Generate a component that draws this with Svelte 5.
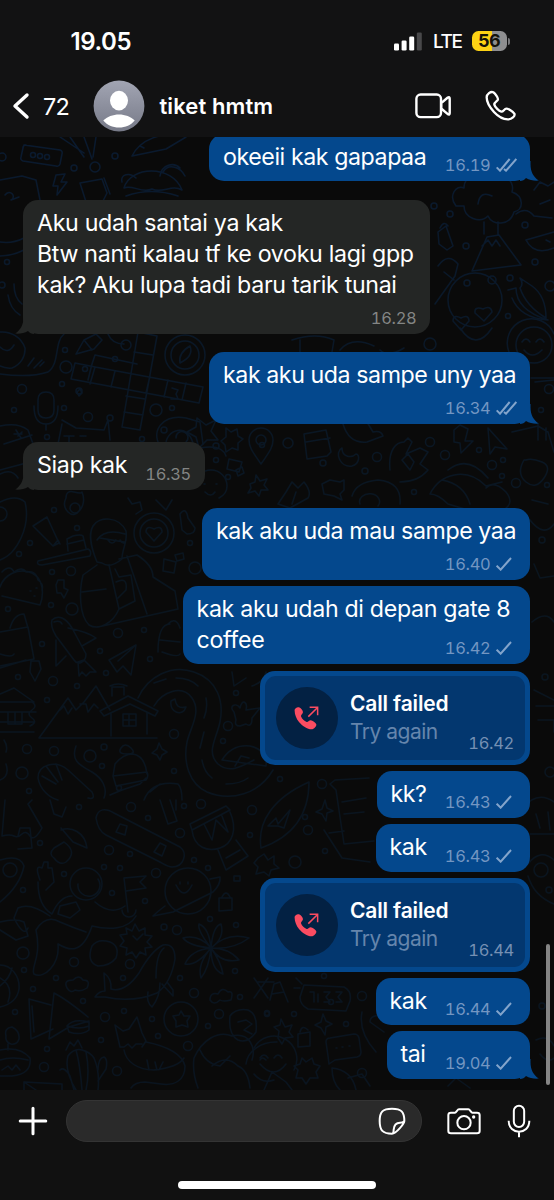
<script lang="ts">
type Tick = 'none' | 'sent' | 'delivered';

interface Message {
  kind: 'text' | 'call';
  mine: boolean;
  lines: string[];
  time: string;
  width: number;
  layout?: 'inline' | 'stacked' | 'overlap';
  tick?: Tick;
  tail?: boolean;
  first?: boolean;
}

const messages: Message[] = [
  { kind: 'text', mine: true, lines: ['okeeii kak gapapaa'], time: '16.19', width: 321, layout: 'inline', tick: 'delivered', tail: true },
  { kind: 'text', mine: false, lines: ['Aku udah santai ya kak', 'Btw nanti kalau tf ke ovoku lagi gpp', 'kak? Aku lupa tadi baru tarik tunai'], time: '16.28', width: 407, layout: 'stacked', tail: true, first: true },
  { kind: 'text', mine: true, lines: ['kak aku uda sampe uny yaa'], time: '16.34', width: 321, layout: 'stacked', tick: 'delivered', tail: true, first: true },
  { kind: 'text', mine: false, lines: ['Siap kak'], time: '16.35', width: 181.5, layout: 'inline', tail: true, first: true },
  { kind: 'text', mine: true, lines: ['kak aku uda mau sampe yaa'], time: '16.40', width: 328, layout: 'stacked', tick: 'sent', first: true },
  { kind: 'text', mine: true, lines: ['kak aku udah di depan gate 8', 'coffee'], time: '16.42', width: 347.5, layout: 'overlap', tick: 'sent' },
  { kind: 'call', mine: true, lines: ['Call failed', 'Try again'], time: '16.42', width: 270 },
  { kind: 'text', mine: true, lines: ['kk?'], time: '16.43', width: 153.5, layout: 'inline', tick: 'sent' },
  { kind: 'text', mine: true, lines: ['kak'], time: '16.43', width: 154.5, layout: 'inline', tick: 'sent' },
  { kind: 'call', mine: true, lines: ['Call failed', 'Try again'], time: '16.44', width: 270 },
  { kind: 'text', mine: true, lines: ['kak'], time: '16.44', width: 154.5, layout: 'inline', tick: 'sent' },
  { kind: 'text', mine: true, lines: ['tai'], time: '19.04', width: 143.5, layout: 'inline', tick: 'sent', tail: true },
];

const dots: [number, number, number][] = [
  [2, 157, 4], [33, 155, 2.5], [40, 156, 2.5], [47, 157, 2.5], [74, 168, 3], [95, 167, 5], [115, 156, 3],
  [7, 262, 2.5], [2, 285, 3], [65, 350, 2.5], [66, 367, 6], [85, 369, 2.5], [126, 345, 5], [115, 359, 2.5], [22, 389, 4.5],
  [62, 384, 2.5], [64, 408, 2.5], [14, 410, 2.5], [88, 417, 4.5], [110, 418, 3], [156, 410, 6], [172, 408, 2.5], [79, 391, 3],
  [47, 437, 2.5], [142, 439, 2.5], [164, 430, 3], [216, 446, 3], [216, 460, 2.5], [228, 477, 2.5], [262, 445, 2.5],
  [54, 510, 2.5], [77, 528, 2.5], [30, 543, 2.5], [19, 554, 2.5], [52, 572, 2.5], [71, 571, 4.5], [8, 609, 2.5], [51, 605, 2.5],
  [72, 609, 6], [118, 633, 4.5], [144, 630, 2.5], [42, 644, 2.5], [100, 651, 2.5], [150, 659, 2.5], [106, 673, 2.5],
  [53, 681, 4.5], [77, 686, 2.5], [18, 677, 2.5], [47, 700, 2.5], [27, 749, 4.5], [54, 751, 4.5], [90, 756, 6], [104, 747, 3],
  [22, 773, 6], [102, 766, 2.5], [174, 734, 4.5], [174, 771, 2.5], [119, 788, 2.5], [29, 791, 2.5], [195, 568, 6], [190, 543, 2.5],
  [228, 726, 4.5], [223, 741, 2.5], [236, 693, 2.5], [79, 807, 2.5], [131, 807, 4.5], [148, 818, 2.5], [184, 806, 2.5],
  [201, 804, 4.5], [252, 810, 4.5], [250, 835, 2.5], [40, 843, 2.5], [109, 850, 4.5], [130, 854, 2.5], [180, 833, 4.5],
  [194, 860, 2.5], [208, 868, 2.5], [104, 867, 2.5], [120, 868, 2.5], [156, 873, 4.5], [64, 874, 2.5], [23, 890, 2.5],
  [145, 901, 2.5], [112, 893, 2.5], [210, 919, 2.5], [164, 927, 3], [177, 930, 4.5], [236, 925, 2.5], [23, 953, 6],
  [74, 962, 4.5], [130, 964, 4.5], [24, 970, 2.5], [56, 978, 2.5], [33, 989, 2.5], [123, 978, 2.5], [180, 978, 2.5],
  [194, 993, 4.5], [235, 971, 2.5], [240, 997, 2.5], [15, 1012, 2.5], [83, 1001, 2.5], [105, 1017, 4.5], [124, 1011, 2.5],
  [152, 1019, 2.5], [219, 1014, 4.5], [208, 1026, 2.5], [267, 1014, 2.5], [101, 1040, 2.5], [158, 1036, 2.5], [188, 1046, 4.5],
  [47, 1049, 2.5], [44, 1067, 4.5], [117, 1071, 4.5], [434, 206, 3], [450, 214, 3], [466, 246, 3], [525, 225, 3],
  [535, 262, 3], [467, 283, 3], [492, 280, 4], [510, 278, 3], [508, 316, 2.5], [430, 344, 6], [550, 286, 5], [549, 389, 4.5],
  [541, 410, 2.5], [288, 443, 5], [323, 463, 3], [365, 471, 3], [377, 457, 4.5], [430, 442, 4.5], [445, 455, 4.5],
  [479, 450, 2.5], [492, 465, 4.5], [503, 460, 2.5], [502, 476, 2.5], [516, 483, 4.5], [414, 492, 2.5], [547, 485, 2.5],
  [322, 784, 4.5], [280, 779, 2.5], [308, 830, 4.5], [325, 851, 2.5], [295, 862, 6], [305, 817, 2.5], [362, 996, 4.5],
  [324, 976, 2.5], [331, 1002, 2.5], [267, 1013, 2.5], [294, 1014, 2.5], [346, 1024, 2.5], [362, 1073, 4.5], [542, 540, 3],
  [545, 677, 3], [550, 772, 5], [549, 890, 3], [542, 1006, 3],
];

const doodles: string[] = [
  // speech card, bolt, hut and palm
  'M24 145l36 5q3 1 2 4l-2 10q-1 3-4 2l-33-5q-3-1-2-4l2-9q0-3 3-3zM56 175l-3 11 5 0-1 9 10-13-6 0 4-8zM80 183l22-4 5 14-6 12h-14zM104 178l6 16',
  'M132 156c8-16 30-26 54-19l-20 12zM140 146l4 2M124 188c6-22 48-24 58 2-10-6-20 4-30-1-10 5-20-5-28-1zM126 196q25-9 52 0M160 176c2-12 14-14 20-8M163 172c6-10 18-4 22 4M122 182c-2-8 8-10 14-4',
  'M0 180l22-4 14 4 4 20M5 195c5-7 12 2 6 5l8-3M60 137l24 16M70 137l14 20M84 137l8 22M96 137l-3 20',
  // left margin
  'M0 242q12 2 24-4M0 256q12 0 24-6M8 295q2 14 12 20M14 284q0 14 8 20M0 332a24 24 0 0 1 25 16a20 20 0 0 1-13 20a22 22 0 0 1-12-2M0 347q8 8 14-2M28 366l6-8M34 368l8-8M40 366l4-4',
  'M0 374q30 4 48-2c12-8 6-30 16-38M76 354l8-14 12-6 6 6-8 9zM84 340l8 10M108 334q4 10 16 10',
  // crossword
  'M95 367l108 20-4 16-128-24 4-16zM138 332l19 4-17 94-18-3zM95 367l-5 17M115 371l-4 16M150 376l-4 17M168 380l-4 17M186 383l-4 17M134 352l19 3M126 396l19 3M124 412l19 3M92 364l3-9 42 9M92 364l-4 16',
  'M77 392l3-3 2 4-3 3zM172 388l6 2-2 4 2 5-7 0',
  'M165 355a20 20 0 1 0 40 0a20 20 0 1 0-40 0M171 355a14 14 0 1 0 28 0a14 14 0 1 0-28 0M180 363q-2-10 10-17q4 10-10 17z',
  'M38 410v-10q0-8 8-8t8 8v10q0 8-8 8t-8-8zM34 406q0 18 12 18t12-18M46 424v6',
  'M62 424l-4 20M62 420l14 8 28 2 4-10 2 20M64 436l10 0-5 0v6M80 436l6 0M160 446c-10-16 4-32 26-28l14 4 3 22M166 446c-2-16 24-26 28 2M176 438a6 6 0 1 1 10 4',
  'M197 418l9 7 10-5-5 11 7 9-11 0-8 8-3-11-9-5 9-5zM226 428l5 4 6-3 1 7 5 3-5 4 0 7-6-2-6 4-1-7-4-4 5-4z',
  'M261 464c-10-14-12-18-12-24a12 12 0 0 1 24 0c0 6-2 10-12 24zM256 440a5 5 0 1 0 10 0a5 5 0 1 0-10 0M229 459l13 3-3 10-12-3zM236 470l6-3 2 6-6 3zM250 484l5-2 1-7 4 6 7-2-3 6 4 5-7 0-2 6-4-5-7 2 3-5z',
  'M0 426q18-4 28 4l8 22q2 8-6 10l-30 8M22 432l-4 4M14 434l8 0M16 430l5 8M4 444l28-9M0 474q12-6 18 4',
  // donut, tube, brush
  'M0 502q16-8 25 0c6 24-8 52-25 58M0 507a7 7 0 1 1 0 14M66 498q0-8 8-6t8 0q4 10-2 18-6 8-12 2t-2-14zM70 508a5 5 0 1 0 10 0a5 5 0 1 0-10 0M128 498l4 6 8-2 2 8-6 4M156 500l10 10 6-10',
  'M33 526l14-9 12 26-6 3zM53 546l5-6 2 4M38 561l50-12q4 2 2 7l-48 9q-6 0-4-4zM68 551l-1-12 6-3q8-2 10 0l3 12M67 544l17-4',
  // reader and books
  'M97 562c-4-10-10-26-4-36 6-10 26-10 33 5 2 10-4 18-4 28q-12 10-20 4zM97 540q8-12 28-6M100 538l24 4M108 540q4 6 8 0M120 540q4 6 6 0',
  'M97 565l-14 10c-4 16-4 40 6 50 10 6 24-2 30-16l-10-44M82 592l24-3M119 559l18-4q16 10 16 22M127 556l20 58M119 609l16-8-4-26-12 2-4-8M116 582q12-6 10 8l-8 8M153 577l22 14 3 18-80 18',
  'M134 533a20 20 0 1 0 40 0a20 20 0 1 0-40 0M140 533a14 14 0 1 0 28 0a14 14 0 1 0-28 0M154 541l-8-9q0-7 8-3q8-4 8 3z',
  'M180 514q6-8 8 4l7 10q0 6-8 6l-5-4zM164 559l12 3-2 11-11-2zM175 555l8-2 1 6-7 2z',
  // taco, bag
  'M0 587c4-12 18-20 32-14 12 6 12 22 8 32l-38-9M2 572q8-8 12 0 8-6 12 0 10-2 12 8 6 4 4 10M30 591h1M34 596h1M36 588h1M56 585l2-5 6 0 0 8 4 2-4 8-3-5-4 0z',
  'M0 632l28-5 6 32-34 7M0 668l26-8M10 628q4-14 14-14l4 14M0 654q12 4 14 0M31 661l8 0 2 8-6 12-5-9z',
  // shuttle, paper plane
  'M52 620c6-6 14-2 20 8l14 26c0 8-8 12-12 6l-18-24q-6-10-4-16zM54 622q6-2 8 2M68 628q20 4 28 10l-14 8M56 640v26l10-10M78 662l6-2 12 12-6 0-4 4-4-4-3 4z',
  'M109 660l27-15-5 30-8-9-6 6zM136 645l-18 16M158 652q0-28 12-28M168 624q8-8 12 4M160 640l20 2M162 652q16 6 18 2',
  // mountain cabin
  'M39 738l29-40 8 12 8-8 12-16 14 24M39 738h118M60 710l4-4 4 8 4-6M80 704l6 0 2 8 6-8 4 4M100 711l28-15 30 15-3 5-25-12-26 12zM111 714v22M147 712v22M123 714h13v12h-13zM129 714v12M123 720h13M112 696l0-9 12 0 0 8M110 686q8-4 17 0',
  'M138 698c10-22 34-34 56-26 24 8 30 30 26 50-4 18-14 30-2 42 12 10 24 2 36-4M154 706c8-14 28-22 38-8 10 14-2 30-5 44-4 20 2 42 20 50 24 10 52 2 66-22M154 683l12-4M176 678q14 0 22 8M206 698q2 10-2 20M204 732l-4 16M202 760q2 12 10 18M226 784q14 0 22-6',
  'M171 701c-2 12 12 16 15 6-8 2-10-2-11-8zM234 712c-6-6 2-10 6-4 2-10 8-6 6 2l14-2-8 10q0 10-6 6l-6 2q-6 0-4-6zM222 760q10-16 28-14 18 4 16 20zM235 766l6-10 8 2',
  // log house, shrimp, hat
  'M0 694l14-6 20 14M0 702h32q6 4 0 8t0 8-2 8M0 712h36M0 722h34M0 732h34M8 712v12h14v-12M15 712v12M4 740q4 6 2 12M0 780q10-4 6-16',
  'M38 778c0-14 18-18 30-8l24 22q4 8-4 6M38 778c2 12 12 20 20 22M46 766l12 16M42 776l14 8M56 764l6 16M76 746c-6 16 6 20 16 26s16 16 12 26',
  'M113 776l2-12q8-10 18-10 12 2 14 20M113 776l34-4q2 4-1 8l-30 6zM121 748q4-6 10 0t-4 6-6-6M152 753l5-4 2-6 3 6 5 3-5 3-2 5-3-5zM144 800q8-20 34-16 4 4 4 16M150 792l10-8M110 795l12-5 18-6 6-6',
  // tree, snowboard, drum
  'M5 800l-3 36q8-2 12 0t8-2 8 2 12-8l-14-24 4-4M18 836l2-8 10 0 2 20-14 1M50 800l4 14 8 3 4-10M160 800l8 24 9-3-7-21M176 800v10',
  'M96 818c2-10 10-10 18-5l66 34c8 6 4 20-8 20-4 0-8-3-14-6l-52-26q-8-4-10-17zM116 832l4-8 7 2-2 9zM154 852l6-9 6 3-4 10z',
  'M190 824l36-18 4 4-38 20zM192 830c2 18 16 22 28 18 12-4 18-18 10-36M204 824l8 16 4-20 12 12-6-16M218 850l8 20 22-14-12-16M226 858l14-8',
  'M54 858q-6-4 0-10l10-6q14 10 2 20-6 4-12-4zM61 830c10-4 24 2 26 18l-14-6-12-14M0 860q20-6 24 6-4 20-24 36M3 870a7 7 0 1 0 14 0a7 7 0 1 0-14 0',
  // astronaut with flag
  'M70 884a16 16 0 1 0 32 0a16 16 0 1 0-32 0M78 884a11 11 0 1 0 20-5M40 880q-6-16 2-12l2-6 4 0 0 6 4 0 2 14-8 8M38 882q0 24 14 32M52 914q8-18 20-18M60 906l16-4 4 8-10 8-12-4zM124 878l4 34M124 878l22-2-6 6 6 6-20 3M95 902q16 14 30 4M122 910a7 7 0 1 0 14 0M136 916c-8 14-28 14-44 10-10 30-24 24-34 18M50 916q-20-14-32-8l-4 10q10 20 14 10M36 930q10-16 24-8c14 6 20 8 26 10M36 930c6 28-6 38-2 44 10 6 26-10 24-30M0 922q16-4 24 0l4 14-12 4-16-10',
  // planet, lock, anise
  'M165 891a23 23 0 1 0 46 0a23 23 0 1 0-46 0M165 906q-8 6-12 10l20-4 40-20q8-8 7-15l-10 2M176 885q8 16 16 0M180 884v-2M188 884v-2M219 898l13 0 0 12-13 1zM222 897q4-8 8 0M234 876h6v5h-6z',
  'M211 948q-14-18-12-24 10 4 12 24zq2-22 10-24 4 14-10 24zq16-16 38-10-16 12-38 10zq18 0 28 12-18 4-28-12zq10 14 12 26-12-4-12-26zq-2 20-10 30-4-14 10-30zq-14 18-26 16 6-14 26-16zq-22-2-28-10 16-4 28 10z',
  'M126 928l6 3 3-7 4 7 6-3 0 7 7 1-5 6 5 5-7 1 1 7-6-3-4 6-4-6-6 3 1-7-7-2 4-5-4-6 7-1zM133 936l4 4 6-6M92 946q6-8 18-4 10 4 6 16-6 8-18 8-12-4-6-20z',
  // whale, clouds, cake
  'M95 997q4-6 10-6l-1-18q8 6 7 16 14 4 28-16 12-22 24-28 12-2 12 14-4 24-18 34-24 10-52 4zM148 992q-2 10 4 15 8-10 8-24M162 984l11 12 0-6-6-8M164 948q-8 6-8 30',
  'M67 988q-4-8 6-8 6-6 10 0 8 0 4 8-6 4-12 2-4 4-8-2zM210 1000q0-8 8-6 4-8 10-2 6-2 3 8-8 2-11 0-6 6-10 0zM29 999l22 6M29 999l2 40 22-10M54 993l-5 46 20-12 20-6M54 993q12 6 34 24M32 1006l2 26M67 1026q6-8 22-4v8q-8 6-20 2zM67 1026q12 4 22 0',
  'M164 1019a17 17 0 1 0 34 0a17 17 0 1 0-34 0M181 1011l3 5 6 0-3 5 1 6-6-2-6 2 0-6-3-5 6-1zM0 965a19 22 0 0 1 19 24q-2 14-19 18M0 986q10-8 12-18M0 978q14 8 8 24',
  'M6 1036q-2-8 6-9 8 4 7 12-2 6-8 5-6-2-5-8zM8 1044v6M0 1050q20-4 30 8 2 16-18 18l-12 0M2 1070l6-4 4 4 4-5 4 5M0 1060q12-4 28 0',
  // llama, cactus, bear
  'M115 1025l8 6 6-2 8-12 5 16 4 8-4 6M115 1025l5 22 4 0 4-3 4 4 4-4 6 0M124 1050c2 12 14 20 30 20 18-2 26-6 30-12M146 1042c20 4 36 12 39 24 0 14-10 20-24 18l-16-2q-10 0-14 6M147 1060l2 10M155 1062l2 8M163 1062l-4 8',
  'M68 1056q6-8 14-6 8 2 12 8 6 14 4 32M68 1056q-4 14 8 34M76 1050q4 14 6 40M86 1052q4 20 0 38M60 1070q4-4 10 6l4 14M98 1070q0-12 6-13 4 2 2 12l-8 12M66 1050l4-8 4 4 4-6 4 8M24 1090v-8l38 2v6M24 1082l12 8',
  'M194 1058c8-18 24-28 38-22 18-4 24 12 20 24M194 1058q-2 14 4 30M200 1050q6 14 20 16l10-10M212 1066q14-12 26 0 10 4 12 22M230 1016q6-8 18-6 10 4 8 22-8 12-18 8-10-6-8-24zM238 1022l8-2 6 4-8 6 8 4M246 1064a30 24 0 0 1 31-22M260 1060q2-4 6 0M254 1074q8 10 20 6',
  // right side
  'M456 206c-8-10 0-22 8-18 0-14 18-18 24-8 10-10 28-2 24 12 12 4 12 18 2 20-4 14-22 14-26 4-8 8-24 2-24-10zM484 222v12M498 222v12M472 271l15-34 12-2 22 30zM482 246l6-6 4 6 4-6 4 6M478 204q2-14 14-8M438 232l8-6 7 20-6 4-8-6zM440 228q4-8 8-2',
  'M448 300a27 27 0 1 0 54 0a27 27 0 1 0-54 0M461 330l-8-9q0-7 8-3q8-4 8 3zM484 321l-9-8q-1-7 8-4q8-4 9 3zM460 328q16 24 32 0',
  'M438 266q10-14 20-2l-3 12-20 28M444 272l10 8M526 240q8 16 28 8M526 240l28-8M546 240l4 2M508 290l8-2q0 22 32 32-28-2-36-22M520 278q4 6 0 10 6 18 26 30 0-22-14-32zM516 214q10-8 18 2l18 2M534 190l6-8 8 4 6-4M540 204l10-4',
  'M509 352a24 24 0 0 1 45-18M516 345a18 18 0 1 0 36 0a18 18 0 1 0-36 0M522 342q4-6 8 0M536 342q4-6 8 0M524 350q8 10 18 0M292 340q24-8 42 0l-2 12M300 340v12M340 350q12-14 34-4M380 350q8 8 24-2M531 378h23M535 382l19-2',
  'M304 434l22-4 5 22-4 4-20 3zM306 442l24-4M343 424q6 20 24 18l16-6q-2-6-10-4l-6-10M342 448c-8 4-2 20 10 18 8-2 8-12 4-12-4 4-14 4-14-6zM454 430l6-5 8 4-3 12 8 0-12 12-1-10-6-1zM488 428l2 26 5-7 12 2z',
  'M390 470c-2-20 6-28 14-28l4-4 4 4-6 12 14-6 8 4-8 12 8 6q-10 12-28 12M402 460l6-6 6 8-4 8zM512 432l26-6 10 6 6 20M538 424v16M546 428v12M524 460q-8 14 2 22t18-4-2-16-16-2z',
  'M430 494c10-20 36-28 56-8l16-4M430 494q8 0 18 10l20 6M448 470q20-16 40 8M442 480q22 4 28 24M486 488q8-8 20 4 8 10 0 16M352 496q4-14 26-16 24 2 22 24M360 504a10 8 0 1 1 18 2M322 484l8-4 10 2 4-2 0 10-4 4 2 6-8-4-10-2zM286 492l6-10 6 6 6-6q8 10 4 16l-18 10-12-4zM296 492l-4 12',
  'M261 848c-4-26 12-50 48-66 0 30-14 54-48 66zM268 826l8-8 2 6 12-14-6 18-6-2zM336 790l-6-6 5-4 34-2M336 790l8 54 30-3M342 802l24-4M344 814l20-2M324 830l18 28 28 4M329 833l15-2M325 800l2 8 6 3-6 2-1 8-4-7-6-2 6-3zM258 858l6-4 4 6 6-4 0 8 5 4-8 2-2 6-5-4-8 2 2-7-4-4z',
  'M254 978l14 20M268 978l-14 20M258 982h16M270 1000l4-16 6-2 8 20M272 994l12-2M304 985l40 2q8 4 6 14l-4 10-38-2q-8-4-8-12zM310 992l4 0v10M318 994v8M324 992h6l-4 5 4 5h-6M336 992h6l-4 5 4 5h-6M296 978l6 6M294 988l6 0',
  'M281 1019l4 8 7-2-3 7 4 5-8 1-3 6-4-6 1-7-5-4 6-2zM323 1014l3 7 6 3-6 3-1 8-4-7-6-3 6-3zM298 1034l12-2 0 14-12 1zM300 1032q2-8 8-2M326 1042q0-4 4-4l24-4q4 0 5 4l2 14q0 4-4 5l-22 3-6 4-1-8zM336 1048h1M342 1047h1M349 1046h1',
  'M254 1048a22 22 0 1 1 40 22M260 1058q4-6 8 0M274 1058q4-6 8 0M260 1064q14 16 26 0M302 1058l4 4 6-4 2 6 6 2-4 6 2 6-8 0-4 6-4-6-6 0 2-8-4-4 6-2zM332 1068q20 2 24 22M332 1068q0 14 8 22M348 1078l14-4 8 12M362 1012q-4 20 14 40M384 1032l-14-10q0-8 14-6M448 1086l8-8 14 10',
  'M522 808q16-18 32-6M536 814l4 14M548 812l2 18M530 834h24M534 870a7 7 0 1 0 14 0a7 7 0 1 0-14 0M528 864q12-16 26-4M528 876q6 20 26 28M532 500l16 4M530 520q14 18 24 4M534 564l6 14 14-2M532 622q14-12 22 0M534 690l20 10M536 706h18M538 720h16v12M536 1040q12-6 18 6M540 1054q8 10 14 4',
  'M232 672l2 14 12-8M252 686q12-4 14-14M264 1090l8-18 14 10 6 8M196 622q20 8 40 0M200 448q22-4 26 8M195 486a16 16 0 0 1 32 0q0 8-8 12M204 484h1M216 484h1M205 492q6 6 10 0',
];
</script>

{#snippet ticks(kind: Tick)}
  <svg class="ticks" viewBox="0 0 63 42">
    {#if kind === 'sent'}
      <path d="M2 26l12 12L45 3" />
    {:else}
      <path d="M2 28l10 10L41 3M24 33l6 5L61 3" />
    {/if}
  </svg>
{/snippet}

<div class="phone">
  <header>
    <div class="status">
      <span class="clock">19.05</span>
      <div class="indicators">
        <svg width="28" height="19" viewBox="0 0 28 19">
          <rect x="0" y="11.5" width="5" height="7" rx="1.3" fill="#fff" />
          <rect x="7.6" y="8.5" width="5" height="10" rx="1.3" fill="#fff" />
          <rect x="15.2" y="4.5" width="5" height="14" rx="1.3" fill="#fff" />
          <rect x="22.8" y="0.5" width="5" height="18" rx="1.3" fill="#48484a" />
        </svg>
        <span class="network">LTE</span>
        <div class="battery"><span class="level">56</span><i></i></div>
      </div>
    </div>
    <div class="nav">
      <svg class="back" width="18" height="28" viewBox="0 0 18 28">
        <path d="M15 3L3 14l12 11" fill="none" stroke="#fff" stroke-width="3.4" stroke-linecap="round" stroke-linejoin="round" />
      </svg>
      <span class="unread">72</span>
      <svg class="avatar" width="52" height="52" viewBox="0 0 52 52">
        <defs>
          <linearGradient id="avatar" x1="0" y1="0" x2="0" y2="1">
            <stop offset="0" stop-color="#a2a5b3" />
            <stop offset="1" stop-color="#777a88" />
          </linearGradient>
        </defs>
        <circle cx="26" cy="26" r="25.4" fill="url(#avatar)" />
        <ellipse cx="26" cy="20.6" rx="9" ry="9.8" fill="#fff" />
        <path d="M10.3 40.5C14 36.7 20 34.5 26 34.5s12 2.2 15.7 6c-3.5 4.4-9.3 7-15.7 7s-12.2-2.6-15.7-7z" fill="#fff" />
      </svg>
      <h1>tiket hmtm</h1>
      <svg class="video" width="38" height="26" viewBox="0 0 38 26">
        <rect x="1.4" y="1.5" width="24.6" height="22.6" rx="4.2" />
        <path d="M26.2 10.2l6.6-5.7q1.9-1 1.9 1.2v14.3q0 2.2-1.9 1.2l-6.6-5.7z" />
      </svg>
      <svg class="voice" width="33.3" height="33.3" viewBox="0 0 100 100">
        <path d="M8 25C8 16 20 6 28 10C34 14 42 25 42 31C42 36 30 40 31 47C33 55 45 66 52 68C58 69 61 59 67 59C73 59 86 67 91 74C95 82 82 91 74 91C60 92 42 82 30 69C17 55 8 40 8 25Z" />
      </svg>
    </div>
  </header>

  <main>
    <svg class="wallpaper" viewBox="0 137 554 952.5">
      <defs>
        <linearGradient id="ink" gradientUnits="userSpaceOnUse" x1="0" y1="137" x2="0" y2="1090">
          <stop offset="0" stop-color="#0a1a2f" />
          <stop offset="0.45" stop-color="#0a151f" />
          <stop offset="1" stop-color="#0a141f" />
        </linearGradient>
      </defs>
      <g fill="none" stroke="url(#ink)" stroke-width="1.5" stroke-linejoin="round" stroke-linecap="round">
        {#each doodles as d}
          <path {d} />
        {/each}
        {#each dots as [cx, cy, r]}
          <circle {cx} {cy} {r} />
        {/each}
      </g>
    </svg>

    <div class="thread">
      {#each messages as m}
        <div
          class="bubble {m.kind} {m.layout ?? ''}"
          class:mine={m.mine}
          class:first={m.first}
          style:width="{m.width}px"
        >
          {#if m.kind === 'call'}
            <div class="call-card">
              <div class="call-icon">
                <svg width="33.3" height="33.3" viewBox="0 0 100 100">
                  <path d="M14 30C13 22 22 18 27 19C33 21 38 28 39 33C39 39 32 41 33 46C36 54 43 61 50 63C55 64 57 58 62 58C68 59 77 65 79 70C80 77 72 85 65 85C52 85 36 74 27 63C19 53 14 41 14 30Z" fill="#fb4c61" />
                  <path d="M55 47L82 20M59 19H83V43" fill="none" stroke="#fb4c61" stroke-width="4.5" />
                </svg>
              </div>
              <div class="call-text">
                <strong>{m.lines[0]}</strong>
                <span>{m.lines[1]}</span>
              </div>
              <span class="time">{m.time}</span>
            </div>
          {:else}
            <p>
              {#each m.lines as line}
                <span>{line}</span>
              {/each}
            </p>
            <div class="meta">
              <span class="time">{m.time}</span>
              {#if m.tick}
                {@render ticks(m.tick)}
              {/if}
            </div>
          {/if}
          {#if m.tail}
            <svg class="tail" width="19" height="20" viewBox="0 0 19 20">
              <path d="M0 0H10.5V3C10.5 11 13.5 16 18.8 19.6C14 20 9.500 19 6 17C4.500 18.800 2.500 20 0 20Z" />
            </svg>
          {/if}
        </div>
      {/each}
    </div>
    <div class="scrollbar"></div>
  </main>

  <footer>
    <div class="composer">
      <svg class="plus" width="30" height="30" viewBox="0 0 30 30">
        <path d="M15 2.2v25.6M2.2 15h25.6" />
      </svg>
      <div class="input">
        <svg width="28" height="28" viewBox="0 0 84 84">
          <path d="M42 80C14 80 5 70 5 42S14 5 42 5S79 14 79 42C79 50 54 80 42 80ZM44 80C47 76 47 72 47 68C48 54 56 47 66 47C71 47 75 46 78 43" />
        </svg>
      </div>
      <svg class="camera" width="34" height="28" viewBox="0 0 102 84">
        <path d="M12 17H24C28 17 31 7 36 7H64C69 7 72 17 76 17H90Q98 17 98 24V72Q98 79 90 79H12Q4 79 4 72V24Q4 17 12 17Z" />
        <circle cx="51" cy="47" r="20" />
        <circle cx="80" cy="30" r="5" class="dot" />
      </svg>
      <svg class="mic" width="24" height="34" viewBox="0 0 72 102">
        <rect x="20.5" y="5" width="31" height="64" rx="15.5" />
        <path d="M5 50C5 94 67 94 67 50M36 83V100" />
      </svg>
    </div>
    <div class="home"></div>
  </footer>
</div>

<style>
:global(body) {
  background: #111;
}

.phone {
  display: flex;
  flex-direction: column;
  width: 554px;
  height: 1200px;
  overflow: hidden;
  background: #0a0a0a;
  color: #fff;
  font-family: Inter, 'Liberation Sans', sans-serif;
}

header {
  flex: none;
  height: 137px;
  box-sizing: border-box;
  padding-top: 26px;
  background: #121213;
}

.status {
  display: flex;
  justify-content: space-between;
  align-items: center;
  height: 30px;
  padding: 0 44px 0 70.5px;
}

.clock {
  font-size: 24px;
  font-weight: 600;
  letter-spacing: -0.4px;
}

.indicators {
  display: flex;
  align-items: center;
}

.network {
  margin: 0 10.5px 0 11px;
  font-size: 19px;
  font-weight: 500;
  letter-spacing: -1.4px;
}

.battery {
  display: flex;
  align-items: center;
  gap: 1px;
}

.level {
  width: 35px;
  height: 20px;
  border-radius: 6.5px;
  background: linear-gradient(90deg, #fdd214 56%, #8e8e90 56%);
  color: #15130a;
  font-size: 18px;
  font-weight: 700;
  line-height: 20px;
  letter-spacing: -0.6px;
  text-indent: -1px;
  text-align: center;
}

.battery i {
  width: 2px;
  height: 7px;
  border-radius: 0 2px 2px 0;
  background: #77777a;
}

.nav {
  display: flex;
  align-items: center;
  height: 52px;
  margin-top: 24px;
  padding: 0 37px 0 12px;
}

.unread {
  width: 49px;
  margin-left: 13px;
  font-size: 23.5px;
  letter-spacing: -0.8px;
}

.avatar {
  flex: none;
  margin-left: 1px;
}

h1 {
  margin: 0 auto 0 14.5px;
  font-size: 22px;
  font-weight: 600;
  letter-spacing: 0.1px;
  white-space: nowrap;
}

.video,
.voice {
  fill: none;
  stroke: #fff;
  stroke-width: 2.4;
  stroke-linejoin: round;
}

.voice {
  margin-left: 31px;
  stroke-width: 7;
}

main {
  flex: none;
  display: grid;
  height: 952.5px;
  overflow: hidden;
}

.wallpaper,
.thread,
.scrollbar {
  grid-area: 1 / 1;
}

.wallpaper {
  width: 554px;
  height: 952.5px;
}

.thread {
  z-index: 1;
  display: flex;
  flex-direction: column;
  align-items: flex-start;
  padding: 0 24px 0 23px;
  margin-top: -9.3px;
}

.bubble {
  --fill: #242625;
  position: relative;
  box-sizing: border-box;
  margin-top: 6.3px;
  padding: 8px 13.5px 8px 14px;
  border-radius: 15px;
  background: var(--fill);
}

.bubble.first {
  margin-top: 18.8px;
}

.mine {
  --fill: #04488d;
  align-self: flex-end;
}

p {
  display: flex;
  flex-direction: column;
  margin: 0;
  font-size: 23.2px;
  line-height: 31.2px;
  letter-spacing: -0.32px;
  white-space: nowrap;
}

.mine p {
  letter-spacing: -0.43px;
}

.overlap.mine p {
  letter-spacing: -0.32px;
}

.inline {
  display: flex;
  justify-content: space-between;
}

.meta {
  display: flex;
  align-items: center;
  align-self: flex-end;
  gap: 5px;
  height: 16px;
}

.stacked .meta {
  justify-content: flex-end;
  margin-top: 8px;
}

.overlap {
  display: grid;
}

.overlap p,
.overlap .meta {
  grid-area: 1 / 1;
}

.overlap .meta {
  justify-self: end;
}

.time {
  color: #838584;
  font-size: 16.5px;
  font-variant-numeric: tabular-nums;
  line-height: 16px;
  letter-spacing: -0.3px;
}

.mine .time {
  color: #7396c2;
}

.ticks {
  width: 21px;
  height: 14px;
  fill: none;
  stroke: #83a4cb;
  stroke-width: 6;
}

.tail {
  position: absolute;
  right: -8.5px;
  bottom: 0;
  fill: var(--fill);
}

.bubble:not(.mine) .tail {
  right: auto;
  left: -8.5px;
  transform: scaleX(-1);
}

.bubble.call {
  height: 93.9px;
  padding: 5px;
}

.call-card {
  display: flex;
  align-items: center;
  box-sizing: border-box;
  height: 100%;
  padding: 0 11px;
  border-radius: 11px;
  background: #03376f;
}

.call-icon {
  display: flex;
  flex: none;
  align-items: center;
  justify-content: center;
  width: 62px;
  height: 62px;
  border-radius: 50%;
  background: #032143;
}

.call-text {
  display: flex;
  flex-direction: column;
  margin-left: 12px;
  font-size: 21px;
  line-height: 28px;
  white-space: nowrap;
}

.call-text strong {
  font-weight: 600;
  letter-spacing: -0.15px;
}

.call-text span {
  color: #6585ac;
  letter-spacing: -0.5px;
}

.call-card .time {
  align-self: flex-end;
  margin: 0 0 9px auto;
  color: #7590b3;
}

.scrollbar {
  z-index: 2;
  align-self: end;
  justify-self: end;
  width: 4.5px;
  height: 141px;
  margin: 0 4px 4.5px 0;
  border-radius: 3px;
  background: #858585;
}

footer {
  flex: 1;
  display: flex;
  flex-direction: column;
  align-items: center;
  background: #111;
}

.composer {
  display: flex;
  align-items: center;
  align-self: stretch;
  padding: 10.5px 23px 0 18px;
}

.composer svg {
  flex: none;
  fill: none;
  stroke: #fff;
  stroke-width: 6;
  stroke-linejoin: round;
}

.composer .plus {
  stroke-width: 3;
  stroke-linecap: round;
}

.input {
  display: flex;
  align-items: center;
  justify-content: flex-end;
  box-sizing: border-box;
  width: 355.5px;
  height: 42px;
  margin: 0 25.5px 0 18px;
  padding-right: 14.5px;
  border: 1px solid #343434;
  border-radius: 21px;
  background: #2a2a2a;
}

.camera {
  margin-right: 25.5px;
}

.composer .dot {
  fill: #fff;
  stroke: none;
}

.home {
  width: 198px;
  height: 8px;
  margin-top: 39px;
  border-radius: 4px;
  background: #fff;
}
</style>
